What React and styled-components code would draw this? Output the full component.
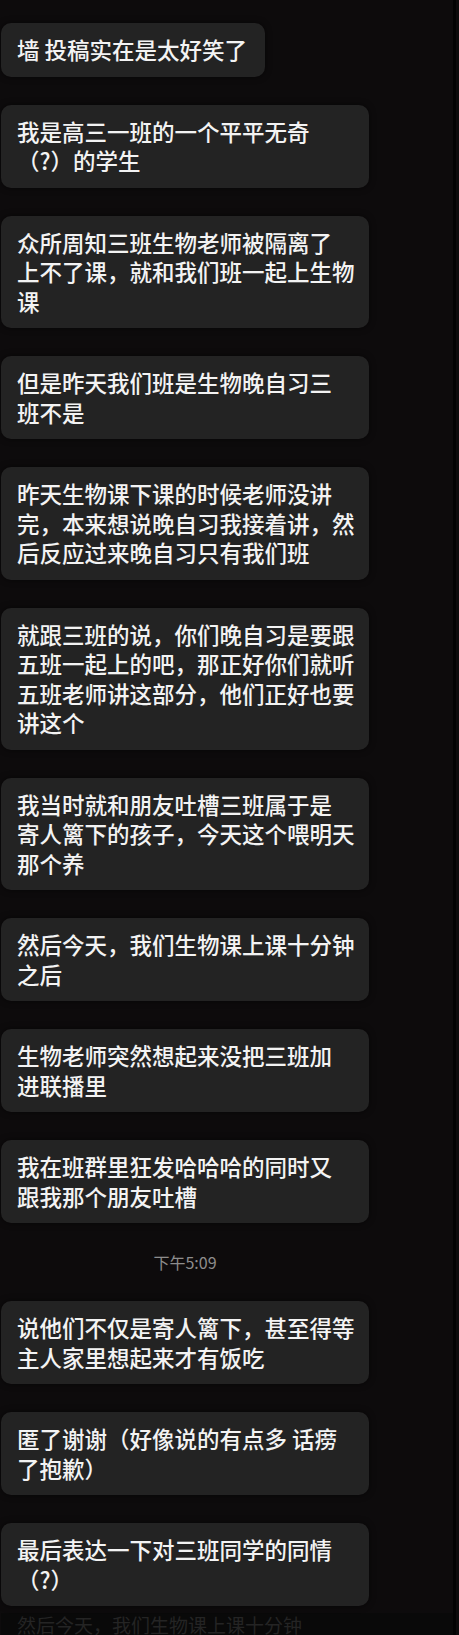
import React from 'react';
import styled, { createGlobalStyle } from 'styled-components';

// ############## Data ##################
const before = [
    ['墙 投稿实在是太好笑了'],
    ['我是高三一班的一个平平无奇', '（?）的学生'],
    ['众所周知三班生物老师被隔离了', '上不了课，就和我们班一起上生物', '课'],
    ['但是昨天我们班是生物晚自习三', '班不是'],
    ['昨天生物课下课的时候老师没讲', '完，本来想说晚自习我接着讲，然', '后反应过来晚自习只有我们班'],
    ['就跟三班的说，你们晚自习是要跟', '五班一起上的吧，那正好你们就听', '五班老师讲这部分，他们正好也要', '讲这个'],
    ['我当时就和朋友吐槽三班属于是', '寄人篱下的孩子，今天这个喂明天', '那个养'],
    ['然后今天，我们生物课上课十分钟', '之后'],
    ['生物老师突然想起来没把三班加', '进联播里'],
    ['我在班群里狂发哈哈哈的同时又', '跟我那个朋友吐槽'],
];

const after = [
    ['说他们不仅是寄人篱下，甚至得等', '主人家里想起来才有饭吃'],
    ['匿了谢谢（好像说的有点多 话痨', '了抱歉）'],
    ['最后表达一下对三班同学的同情', '（?）'],
];

// ############## Styles ##################
const GlobalStyle = createGlobalStyle`
    html, body {
        margin: 0;
        padding: 0;
        background: #0d0b0c;
    }
    body {
        font-family: "Noto Sans CJK SC", "Noto Sans", sans-serif;
    }
`;

const Page = styled.div`
    width: 456px;
    height: 1635px;
    border-right: 3px solid #030303;
    background: #0d0b0c;
    padding: 23px 0 0 1px;
    box-sizing: border-box;
    overflow: hidden;
`;

const Thread = styled.div`
    display: flex;
    flex-direction: column;
    align-items: flex-start;
    gap: 28px;
`;

const Bubble = styled.div`
    width: ${({ $full }) => ($full ? '368px' : 'auto')};
    box-sizing: border-box;
    padding: 12px 18px 12px 16px;
    background: #232323;
    border-radius: 10px;
    box-shadow: 0 0 6px rgba(0, 0, 0, 0.55);
    color: #f3f3f3;
    font-size: 22.5px;
    font-weight: 500;
    line-height: 29.5px;
    white-space: nowrap;
`;

const Line = styled.div``;

const Stamp = styled.div`
    width: 368px;
    height: 22px;
    line-height: 22px;
    text-align: center;
    font-size: 16px;
    color: #8d8d8d;
`;

const Ghost = styled.div`
    margin-top: 7px;
    height: 24px;
    background: #090909;
    padding-left: 16px;
    color: #242424;
    font-size: 19px;
    line-height: 24px;
    white-space: nowrap;
`;

const Message = ({ lines }) => (
    <Bubble $full={lines.length > 1}>
        {lines.map((l, i) => (
            <Line key={i}>{l}</Line>
        ))}
    </Bubble>
);

export default function App() {
    return (
        <>
            <GlobalStyle />
            <Page>
                <Thread>
                    {before.map((m, i) => (
                        <Message key={'b' + i} lines={m} />
                    ))}
                    <Stamp>下午5:09</Stamp>
                    {after.map((m, i) => (
                        <Message key={'a' + i} lines={m} />
                    ))}
                </Thread>
                <Ghost>然后今天，我们生物课上课十分钟</Ghost>
            </Page>
        </>
    );
}
